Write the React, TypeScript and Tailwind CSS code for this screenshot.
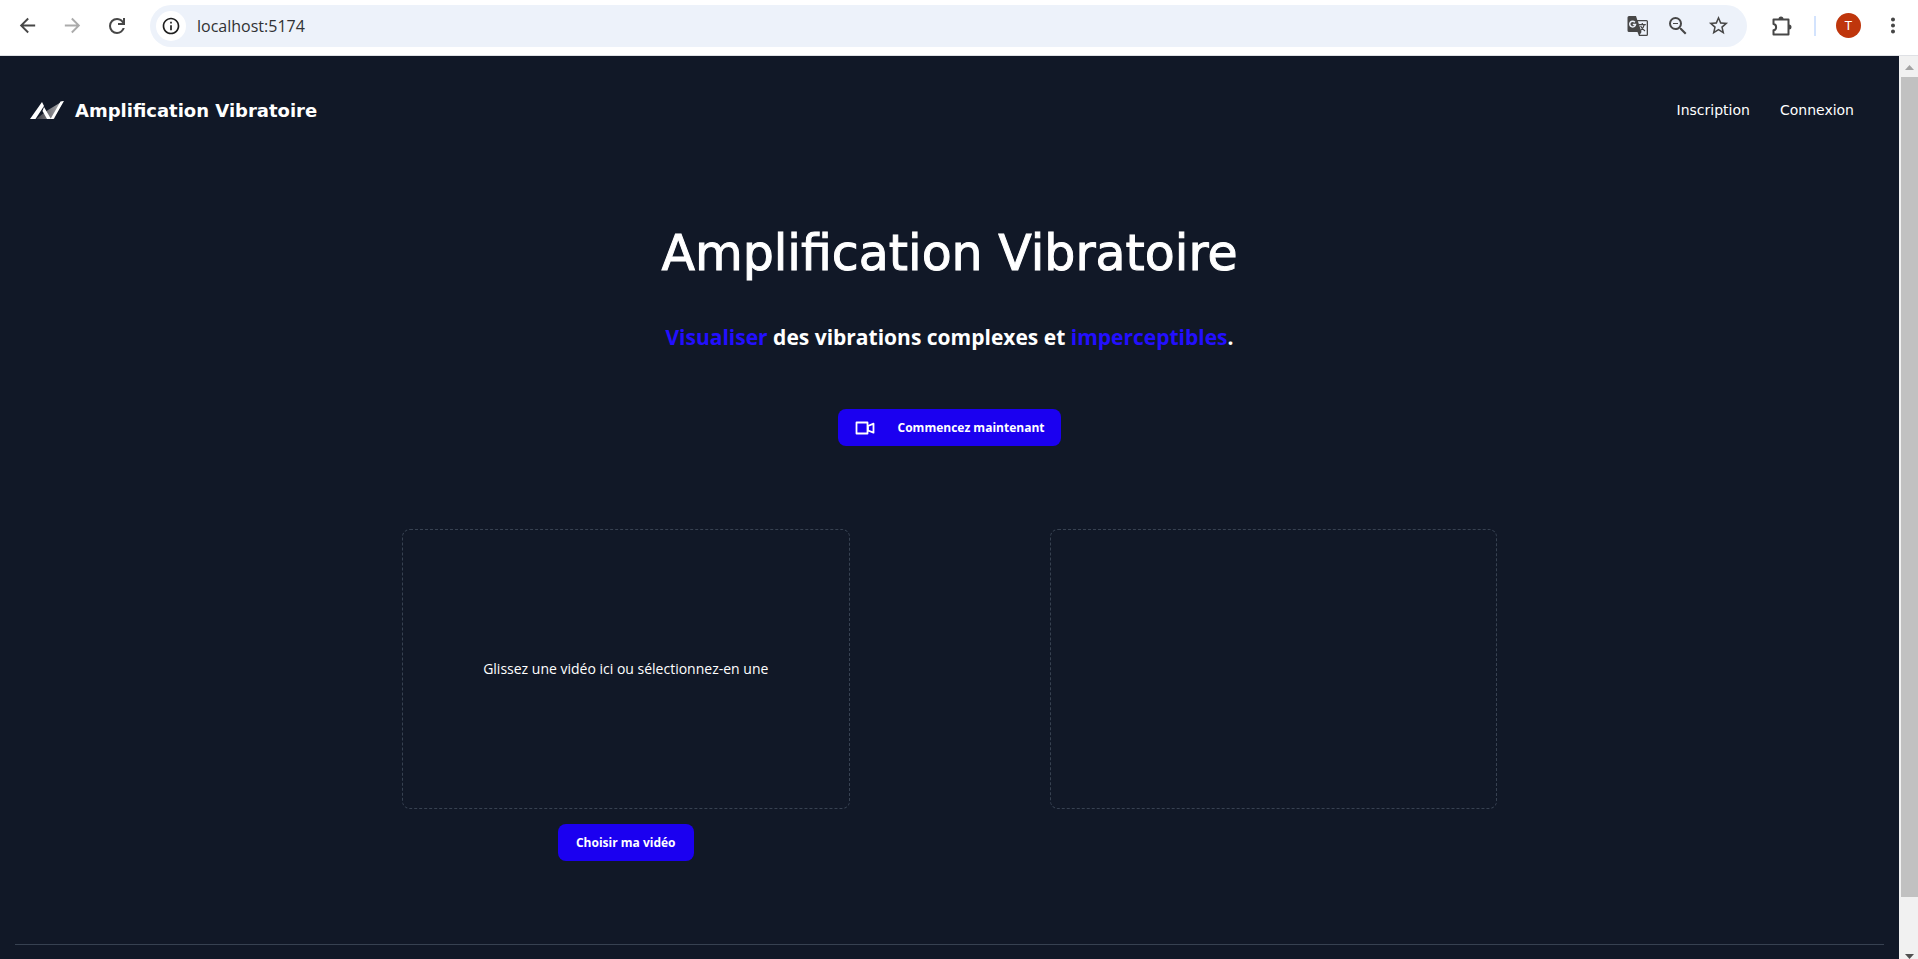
import { MdArrowBack, MdArrowForward, MdInfoOutline, MdZoomOut, MdStarBorder, MdMoreVert } from "react-icons/md";

function RefreshIcon() {
  return (
    <svg viewBox="0 -960 960 960" className="size-6 fill-[#474747]" aria-hidden="true">
      <path d="M480-160q-134 0-227-93t-93-227q0-134 93-227t227-93q69 0 132 28.5T720-690v-110h80v280H520v-80h168q-32-56-87.5-88T480-720q-100 0-170 70t-70 170q0 100 70 170t170 70q77 0 139-44t87-116h84q-28 106-114 173t-196 67Z" />
    </svg>
  );
}

function TranslateIcon() {
  return (
    <svg viewBox="0 0 22 22" className="size-[22px]" aria-hidden="true">
      <path d="M2 1h7l1.300 4H19.500A1.500 1.500 0 0 1 21 6.500v13a1.500 1.500 0 0 1-1.500 1.500H12l-1.500-4H2a1.500 1.500 0 0 1-1.500-1.500V2.500A1.500 1.500 0 0 1 2 1z" fill="#474747" />
      <path d="M10.900 6.300H19.700v13.400H12.800l1.700-2.700z" fill="#edf2fa" />
      <path d="M7.900 7.200A2.900 2.900 0 1 0 8.500 9.600H5.800" fill="none" stroke="#edf2fa" strokeWidth="1.500" />
      <path d="M12 9.700h6.800M15.300 8v1.700M17.300 9.700c-.5 2.500-2 4.500-4 6M13.600 11c1 2 2.300 3.500 4.400 5" fill="none" stroke="#474747" strokeWidth="1.200" />
    </svg>
  );
}

function PuzzleIcon() {
  return (
    <svg viewBox="0 0 22 22" className="size-[22px]" aria-hidden="true">
      <path d="M2.500 4.500h15v15h-15v-4.200c3.500-.5 3.500-5.800 0-6.300z" fill="none" stroke="#474747" strokeWidth="2" strokeLinejoin="round" />
      <path d="M7.500 4a2.500 2.500 0 0 1 5 0zM18 9.500a2.500 2.500 0 0 1 0 5z" fill="#474747" />
    </svg>
  );
}

function Logo() {
  return (
    <svg viewBox="0 0 34 20" className="h-5 w-[34px]" aria-hidden="true">
      <defs>
        <linearGradient id="fade" x1="0" x2="1" y1="0" y2="0">
          <stop offset="0" stopColor="#3d3d45" />
          <stop offset="1" stopColor="#b5b5b8" />
        </linearGradient>
      </defs>
      <path d="M6 19 18 10 33 1 24 19z" fill="url(#fade)" />
      <path d="M0 19 12 2l2 4L5.500 19zM14 7l7 12h-4l-4.500-8zM20.500 19 30.500 1.500 34 1 23.500 19z" fill="#fff" />
    </svg>
  );
}

function VideoIcon() {
  return (
    <svg viewBox="0 0 20 14" className="h-[14px] w-5" fill="none" stroke="#fff" strokeWidth="1.800" strokeLinejoin="round" aria-hidden="true">
      <path d="M1.500 1.500h11v11h-11zM13 5 18.500 2.700v9L13 9.500z" />
    </svg>
  );
}

const iconButton = "flex size-6 items-center justify-center text-[#474747]";
const action = "flex h-[37px] items-center rounded-lg bg-[#1b00f0] text-xs font-bold text-white";
const drop = "flex h-[280px] flex-1 items-center justify-center rounded-lg border border-dashed border-[#374151]";

function BrowserBar() {
  return (
    <div className="flex h-14 items-center border-b border-[#dfe1e5] bg-white pr-[13px] pb-1 pl-[15px]">
      <div className="flex gap-[21px]">
        <button aria-label="Retour" className={iconButton}><MdArrowBack size={23} /></button>
        <button aria-label="Avancer" className="flex size-6 items-center justify-center text-[#ababab]"><MdArrowForward size={23} /></button>
        <button aria-label="Actualiser" className={iconButton}><RefreshIcon /></button>
      </div>
      <div className="ml-[21px] flex h-[42px] flex-1 items-center rounded-full bg-[#edf2fa] pr-[17px] pl-1.5">
        <button aria-label="Informations sur le site" className="flex size-[30px] items-center justify-center rounded-full bg-white text-[#1f1f1f]"><MdInfoOutline size={20} /></button>
        <input aria-label="Adresse" defaultValue="localhost:5174" className="ml-[11px] min-w-0 flex-1 bg-transparent font-['Open_Sans',sans-serif] text-base text-[#303134] outline-none" />
        <div className="flex gap-4">
          <button aria-label="Traduire" className={iconButton}><TranslateIcon /></button>
          <button aria-label="Zoom" className={iconButton}><MdZoomOut size={24} /></button>
          <button aria-label="Favoris" className={iconButton}><MdStarBorder size={23} /></button>
        </div>
      </div>
      <button aria-label="Extensions" className="ml-[23px] flex size-6 items-center justify-center"><PuzzleIcon /></button>
      <span className="ml-5 h-5 w-0.5 bg-[#d3e3fd]" />
      <button aria-label="Profil" className="ml-5 flex size-[25px] items-center justify-center rounded-full bg-[#bf360c] font-[Roboto,sans-serif] text-[13px] text-white">T</button>
      <button aria-label="Menu" className="ml-5 flex size-6 items-center justify-center text-[#474747]"><MdMoreVert size={25} /></button>
    </div>
  );
}

export default function App() {
  return (
    <div className="flex h-screen flex-col overflow-hidden bg-[#111827] font-['Open_Sans',sans-serif] text-white">
      <BrowserBar />
      <div className="flex min-h-0 flex-1">
        <div className="min-w-0 flex-1 overflow-hidden">
          <header className="flex h-[108px] items-center justify-between pr-[45px] pl-[30px] font-['DejaVu_Sans',sans-serif]">
            <a href="#accueil" className="flex items-center gap-[11px] text-[18px] font-bold"><Logo />Amplification Vibratoire</a>
            <nav className="flex gap-[30px] text-sm">
              <a href="#inscription">Inscription</a>
              <a href="#connexion">Connexion</a>
            </nav>
          </header>
          <main className="flex flex-col items-center">
            <h1 className="mt-[60px] font-['DejaVu_Sans',sans-serif] text-[49px] leading-[60px] [-webkit-text-stroke:1px_white]">Amplification Vibratoire</h1>
            <p className="mt-[35px] text-[21px] leading-9 font-bold"><span className="text-[#230fff]">Visualiser</span> des vibrations complexes et <span className="text-[#230fff]">imperceptibles</span>.</p>
            <button className={action + " mt-[54px] gap-[23px] px-[17px]"}><VideoIcon />Commencez maintenant</button>
            <div className="mt-[83px] flex w-full max-w-[1095px] gap-[200px]">
              <div className={drop + " text-sm"}>Glissez une vidéo ici ou sélectionnez-en une</div>
              <div className={drop} />
            </div>
            <div className="mt-[15px] flex w-full max-w-[1095px] gap-[200px]">
              <div className="flex flex-1 justify-center"><button className={action + " px-[18px]"}>Choisir ma vidéo</button></div>
              <div className="flex-1" />
            </div>
          </main>
          <hr className="mx-[15px] mt-[83px] border-[#374151]" />
        </div>
        <div className="flex w-[19px] flex-col items-center bg-[#f1f1f1] pl-0.5" aria-hidden="true">
          <svg viewBox="0 0 17 21" className="h-[21px] w-[17px]"><path d="M4 14h9L8.500 9z" fill="#a3a3a3" /></svg>
          <div className="w-full flex-1 bg-[#c1c1c1]" />
          <svg viewBox="0 0 17 62" className="h-[62px] w-[17px]"><path d="M4 57h9l-4.500 5z" fill="#505050" /></svg>
        </div>
      </div>
    </div>
  );
}
